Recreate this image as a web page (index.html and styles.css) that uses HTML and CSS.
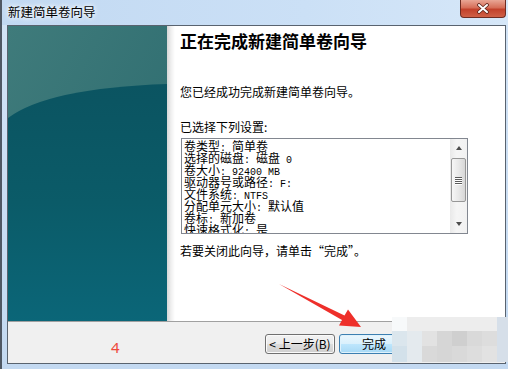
FILE: index.html
```html
<!DOCTYPE html>
<html lang="zh-CN">
<head>
  <meta charset="UTF-8">
  <title>新建简单卷向导</title>
  <link rel="stylesheet" href="styles.css">
</head>
<body>
  <div class="window">
    <div class="titlebar">
      <span class="title">新建简单卷向导</span>
      <button class="close" aria-label="关闭">
        <svg width="12" height="11" viewBox="0 0 12 11">
          <path d="M2,2 L10,9 M10,2 L2,9" stroke="#5b241b" stroke-width="3.6" stroke-linecap="round"/>
          <path d="M2,2 L10,9 M10,2 L2,9" stroke="#ffffff" stroke-width="2" stroke-linecap="round"/>
        </svg>
      </button>
    </div>

    <div class="client">
      <div class="main">
        <div class="side">
          <svg width="159" height="295" viewBox="0 0 159 295" preserveAspectRatio="none">
            <defs>
              <linearGradient id="upper" x1="0" y1="0" x2="1" y2="1">
                <stop offset="0" stop-color="#3f7b7b"/>
                <stop offset="1" stop-color="#2b6a6e"/>
              </linearGradient>
              <linearGradient id="lower" x1="0" y1="0" x2="0" y2="1">
                <stop offset="0" stop-color="#0b5461"/>
                <stop offset="0.5" stop-color="#0b5b68"/>
                <stop offset="1" stop-color="#0b6678"/>
              </linearGradient>
            </defs>
            <rect width="159" height="295" fill="url(#upper)"/>
            <path d="M0,92 Q40,62 159,58 L159,295 L0,295 Z" fill="url(#lower)"/>
          </svg>
        </div>
        <div class="content">
          <h1>正在完成新建简单卷向导</h1>
          <p class="intro">您已经成功完成新建简单卷向导。</p>
          <p class="label">已选择下列设置:</p>
          <div class="listbox">
            <div class="lines">
              <div>卷类型<span class="a">: </span>简单卷</div>
              <div>选择的磁盘<span class="a">: </span>磁盘<span class="a"> 0</span></div>
              <div>卷大小<span class="a">: 92400 MB</span></div>
              <div>驱动器号或路径<span class="a">: F:</span></div>
              <div>文件系统<span class="a">: NTFS</span></div>
              <div>分配单元大小<span class="a">: </span>默认值</div>
              <div>卷标<span class="a">: </span>新加卷</div>
              <div>快速格式化<span class="a">: </span>是</div>
            </div>
            <div class="scrollbar">
              <div class="sb-btn"><span class="arrow-up"></span></div>
              <div class="thumb">
                <span class="grip"></span>
                <span class="grip"></span>
                <span class="grip"></span>
                <span class="grip"></span>
              </div>
              <div class="track"></div>
              <div class="sb-btn"><span class="arrow-down"></span></div>
            </div>
          </div>
          <p class="hint">若要关闭此向导，请单击“完成”。</p>
        </div>
      </div>

      <div class="footer">
        <span class="step">4</span>
        <div class="buttons">
          <button class="btn">&lt; 上一步(B)</button>
          <button class="btn primary">完成</button>
          <button class="btn">取消</button>
        </div>
      </div>
    </div>
  </div>

  <!-- annotation drawn over the dialog -->
  <svg class="pointer" width="508" height="369" viewBox="0 0 508 369">
    <polygon points="279,284 344.5,315.5 348,309.5 361,327 339,325.5 342,320" fill="#ee2f2a"/>
  </svg>

  <!-- pixelated area over the cancel button -->
  <div class="mosaic">
    <span class="m0"></span><span class="m1"></span><span class="m1"></span><span class="m1"></span><span class="m1"></span><span class="m1"></span><span class="m1"></span><span class="mb"></span>
    <span class="m2"></span><span class="m3"></span><span class="m4"></span><span class="m5"></span><span class="m6"></span><span class="m7"></span><span class="m8"></span><span class="mb"></span>
    <span class="m9"></span><span class="m3"></span><span class="m7"></span><span class="m5"></span><span class="m7"></span><span class="m8"></span><span class="m4"></span><span class="mb"></span>
  </div>
</body>
</html>
```

FILE: styles.css
```css
body {
  margin: 0;
  font-family: "Noto Sans CJK SC", sans-serif;
  font-size: 12px;
  color: #000;
}
.window {
  width: 508px;
  height: 369px;
  box-sizing: border-box;
  border-left: 2px solid #4f5864;
  background: linear-gradient(to bottom, #d3e4f6, #c3d9f1);
  display: flex;
  flex-direction: column;
  overflow: hidden;
}
.titlebar {
  height: 25px;
  flex: none;
  display: flex;
  align-items: flex-start;
  background: linear-gradient(to right, #c2d9f2, #cbe0f6 60%, #d6e7f8);
}
.title {
  padding: 5px 0 0 6px;
  font-size: 12.5px;
  line-height: 13px;
  text-shadow: 0 0 4px #fff, 0 0 6px #fff;
}
.close {
  margin-left: auto;
  margin-right: 2px;
  width: 46px;
  height: 18px;
  padding: 0;
  box-sizing: border-box;
  border: 1px solid #6e2c22;
  border-top: none;
  border-radius: 0 0 4px 4px;
  background: linear-gradient(to bottom, #e9a695 0, #d66e58 45%, #c2412b 55%, #cf6046 100%);
  display: flex;
  align-items: center;
  justify-content: center;
}
.close svg {
  display: block;
}
.client {
  margin: 0 2px 0 5px;
  height: 339px;
  box-sizing: border-box;
  border: 1px solid #59636f;
  display: flex;
  flex-direction: column;
}
.main {
  height: 295px;
  flex: none;
  display: flex;
}
.side {
  width: 159px;
  flex: none;
}
.side svg {
  display: block;
}
.content {
  flex: 1;
  padding: 6px 0 0 13px;
  background: linear-gradient(to right, #d6d6d6, #efefef 4px, #fff 8px);
  display: flex;
  flex-direction: column;
  align-items: flex-start;
}
.content h1 {
  margin: 0;
  font-size: 17px;
  line-height: 17px;
  font-weight: bold;
}
.content p {
  margin: 0;
  line-height: 12px;
}
.intro {
  margin-top: 37px !important;
}
.label {
  margin-top: 23px !important;
}
.hint {
  margin-top: 11px !important;
}
.listbox {
  margin: 5px 0 0 1px;
  width: 287px;
  height: 96px;
  box-sizing: border-box;
  border: 1px solid #828790;
  display: flex;
  background: #fff;
}
.lines {
  flex: 1;
  padding: 1px 0 0 2px;
  line-height: 12px;
  overflow: hidden;
  white-space: nowrap;
}
.lines div {
  height: 12px;
}
.a {
  font-family: "Liberation Mono", monospace;
  font-size: 10px;
  line-height: 10px;
  white-space: pre;
}
.scrollbar {
  width: 17px;
  flex: none;
  background: linear-gradient(to right, #e9e9e9, #f5f5f5 40%, #f1f1f1);
  display: flex;
  flex-direction: column;
  align-items: center;
}
.sb-btn {
  height: 18px;
  width: 100%;
  flex: none;
  display: flex;
  align-items: center;
  justify-content: center;
}
.arrow-up {
  width: 0;
  height: 0;
  border-left: 3.5px solid transparent;
  border-right: 3.5px solid transparent;
  border-bottom: 4px solid #4d4d4d;
}
.arrow-down {
  width: 0;
  height: 0;
  border-left: 3.5px solid transparent;
  border-right: 3.5px solid transparent;
  border-top: 4px solid #4d4d4d;
}
.thumb {
  margin-top: 1px;
  width: 15px;
  height: 44px;
  flex: none;
  box-sizing: border-box;
  border: 1px solid #979797;
  border-radius: 2px;
  background: linear-gradient(to right, #f6f6f6, #e8e8e8 50%, #d7d7d7);
  display: flex;
  flex-direction: column;
  align-items: center;
  justify-content: center;
  gap: 1px;
}
.grip {
  width: 7px;
  height: 1px;
  background: #5a5a5a;
  box-shadow: 0 1px 0 #fff;
}
.track {
  flex: 1;
}
.footer {
  flex: 1;
  border-top: 1px solid #a0a0a0;
  background: #f0f0f0;
  display: flex;
  align-items: flex-start;
  padding: 12px 22px 0 103px;
}
.step {
  margin-top: 3px;
  font-family: "Noto Sans", sans-serif;
  font-size: 15px;
  line-height: 20px;
  color: #ee4a3c;
}
.buttons {
  margin-left: auto;
  display: flex;
  gap: 4px;
}
.btn {
  width: 70px;
  height: 20px;
  padding: 0;
  box-sizing: border-box;
  border: 1px solid #707070;
  border-radius: 3px;
  background: linear-gradient(to bottom, #f2f2f2 0, #ebebeb 50%, #dddddd 50%, #cfcfcf 100%);
  box-shadow: inset 0 0 0 1px #fafafa;
  font-family: "Noto Sans CJK SC", sans-serif;
  font-size: 12px;
  line-height: 18px;
  color: #000;
}
.btn.primary {
  border-color: #3c7fb1;
  background: linear-gradient(to bottom, #eaf6fd 0, #d9f0fc 50%, #bee6fd 50%, #a7d9f5 100%);
  box-shadow: inset 0 0 0 1px #dff2fc;
}
.pointer {
  position: absolute;
  left: 0;
  top: 0;
  pointer-events: none;
}
.mosaic {
  position: absolute;
  left: 392px;
  top: 317px;
  display: grid;
  grid-template-columns: repeat(7, 15px) 11px;
  grid-template-rows: 14px 15px 16px;
}
.m0 { background: #f7f9fa; }
.m1 { background: #ededed; }
.m2 { background: #dbe6ed; }
.m3 { background: #e4eaee; }
.m4 { background: #e2e2e2; }
.m5 { background: #d6d6d6; }
.m6 { background: #cfcfcf; }
.m7 { background: #d9d9d9; }
.m8 { background: #dddddd; }
.m9 { background: #d3e1ea; }
.mb { background: #d6dfe9; }
```
